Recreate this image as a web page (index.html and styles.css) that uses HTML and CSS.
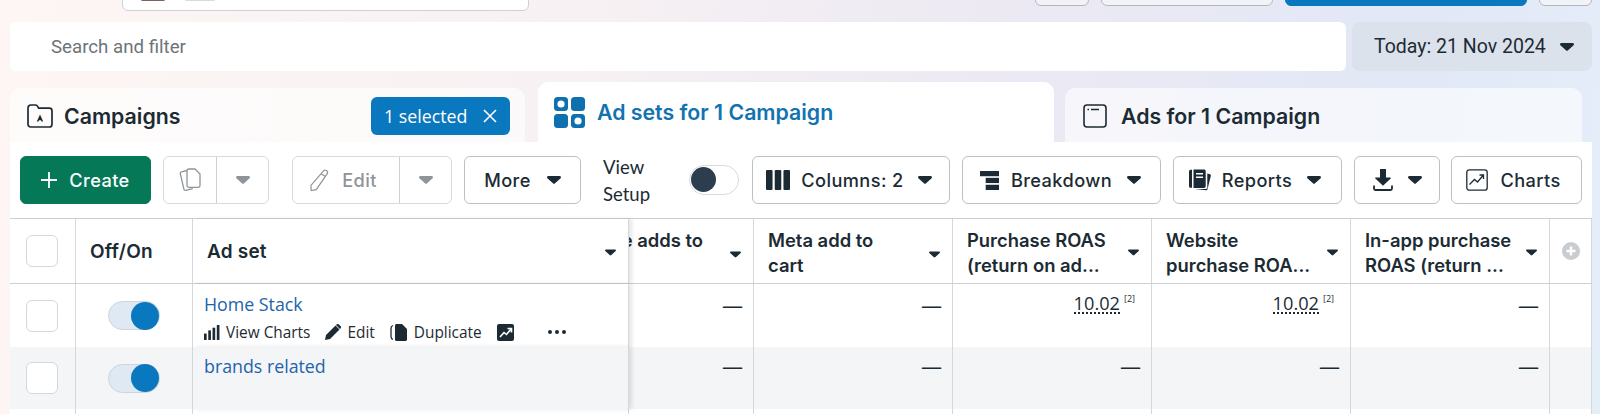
FILE: index.html
```html
<!DOCTYPE html>
<html lang="en">
<head>
<meta charset="utf-8">
<title>Ad sets</title>
<link rel="stylesheet" href="styles.css">
</head>
<body>
<svg class="defs" width="0" height="0" aria-hidden="true">
  <symbol id="caret" viewBox="0 0 16 9"><path d="M1.6 0h12.8c1.3 0 2 1.4 1.2 2.4L9.2 8.2a1.7 1.7 0 0 1-2.4 0L.4 2.4C-.4 1.4.3 0 1.6 0z"/></symbol>
</svg>
<div class="page">
  <header class="topbar">
    <div class="account"><span class="sliver sliver-a"></span><span class="sliver sliver-b"></span></div>
    <div class="top-actions">
      <span class="top-btn tb-1"></span>
      <span class="top-btn tb-2"></span>
      <span class="top-btn tb-3"></span>
      <span class="top-btn tb-4"></span>
    </div>
  </header>

  <div class="filter-row">
    <div class="search">Search and filter</div>
    <div class="date">Today: 21 Nov 2024 <svg class="caret date-caret"><use href="#caret"/></svg></div>
  </div>

  <nav class="tabs">
    <div class="tab tab-campaigns">
      <svg class="tab-icon" viewBox="0 0 26 24" fill="none" stroke="#1c2b33" stroke-width="1.7"><path d="M1 4.2C1 2.4 2.2 1 4 1h4.6c1 0 1.7.7 2.2 1.6l.8 1.6H22.4c1.500 0 2.600 1.100 2.600 2.600v13.400c0 1.600-1.100 2.800-2.700 2.800H3.700C2.100 23 1 21.800 1 20.200z"/><path d="M13 10.500l-3.200 7h1.700l.5-1.300h2l.5 1.300h1.700z" fill="#1c2b33" stroke="none"/></svg>
      <span class="tab-title">Campaigns</span>
      <span class="pill">1 selected <svg class="pill-x" viewBox="0 0 14 14" fill="none" stroke="#fff" stroke-width="1.600"><path d="M1 1l12 12M13 1L1 13"/></svg></span>
    </div>
    <div class="tab tab-active">
      <svg class="tab-icon-active" viewBox="0 0 31 31"><g fill="#0f70b0"><rect width="14" height="14" rx="3.500"/><rect x="17" width="14" height="14" rx="3.500"/><rect y="17" width="14" height="14" rx="3.500"/><rect x="17" y="17" width="14" height="14" rx="3.500"/></g><circle cx="7" cy="7" r="3.600" fill="#fff"/><circle cx="24" cy="24" r="3.600" fill="#fff"/></svg>
      <span class="tab-title active-title">Ad sets for 1 Campaign</span>
    </div>
    <div class="tab tab-ads">
      <svg class="tab-icon ads-icon" viewBox="0 0 24 24" fill="none" stroke="#1c2b33" stroke-width="1.600"><rect x="1" y="1" width="22" height="22" rx="3"/><path d="M4.500 5.500h1.500M8 5.500h8"/></svg>
      <span class="tab-title">Ads for 1 Campaign</span>
    </div>
  </nav>

  <main class="panel">
    <div class="toolbar">
      <button class="btn btn-create"><svg class="ico-plus" viewBox="0 0 16 16" stroke="#fff" stroke-width="1.800"><path d="M8 0v16M0 8h16"/></svg>Create</button>
      <div class="btn-group group-copy">
        <span class="seg seg-main"><svg class="ico-20" viewBox="0 0 22 24" fill="none" stroke="#8f9499" stroke-width="1.300"><path d="M8 2.500L2.500 3.800C1.600 4 1 4.800 1.300 5.700l3.600 15.400c.2.900 1 1.400 1.900 1.200l7-1.600"/><path d="M8 2.800C8 1.800 8.800 1 9.800 1H16l5 5v11.500c0 1-.8 1.800-1.800 1.800H9.800c-1 0-1.800-.8-1.800-1.800z"/></svg></span>
        <span class="seg seg-caret"><svg class="caret caret-muted"><use href="#caret"/></svg></span>
      </div>
      <div class="btn-group group-edit">
        <span class="seg seg-edit"><svg class="ico-20 ico-pencil" viewBox="0 0 24 24" fill="none" stroke="#8f9499" stroke-width="1.300"><path d="M16.500 2.500a2.600 2.600 0 0 1 4.500 2.600L9 22.500l-5.500 1-.3-5.600zM14.500 5.500l5 3"/></svg>Edit</span>
        <span class="seg seg-caret"><svg class="caret caret-muted"><use href="#caret"/></svg></span>
      </div>
      <button class="btn btn-more">More<svg class="caret"><use href="#caret"/></svg></button>
      <div class="view-setup">View<br>Setup</div>
      <span class="switch"><span class="switch-knob"></span></span>
      <button class="btn btn-columns"><svg class="ico-columns" viewBox="0 0 22 20" fill="#1c2b33" preserveAspectRatio="none"><rect width="6" height="20" rx="1"/><rect x="8" width="6" height="20" rx="1"/><rect x="16" width="6" height="20" rx="1"/></svg>Columns: 2<svg class="caret"><use href="#caret"/></svg></button>
      <button class="btn btn-breakdown"><svg class="ico-breakdown" viewBox="0 0 20 20" fill="#1c2b33"><rect width="20" height="5.500"/><rect x="6" y="7.200" width="14" height="5.500"/><rect x="6" y="14.500" width="14" height="5.500"/></svg>Breakdown<svg class="caret"><use href="#caret"/></svg></button>
      <button class="btn btn-reports"><svg class="ico-reports" viewBox="0 0 22 22" fill="#1c2b33"><path d="M0 2.500C0 1.500.7.800 1.500.8H3v18H1.500C.7 18.800 0 18 0 17z"/><path d="M4.500.5H15c1 0 1.700.7 1.700 1.700v15c0 1-.7 1.700-1.700 1.700H4.500zM7 4v1.500h7V4zm0 3.500V9h7V7.500z" fill-rule="evenodd"/><path d="M18.300 4.500l2.700.8c.7.2 1 .9.8 1.600l-3.300 13.400c-.2.800-.9 1.200-1.700 1L6 19.900h11c.8 0 1.300-.6 1.300-1.400z"/></svg>Reports<svg class="caret"><use href="#caret"/></svg></button>
      <button class="btn btn-download"><svg class="ico-download" viewBox="0 0 20 22" fill="#1c2b33"><path d="M7 0h6v8.500h4.200c.6 0 .9.700.5 1.100L10 16.800 2.300 9.600c-.4-.4-.1-1.100.5-1.100H7z"/><path d="M1 16.500v3c0 1 .6 1.500 1.500 1.500h15c.9 0 1.500-.5 1.500-1.500v-3" fill="none" stroke="#1c2b33" stroke-width="1.800"/></svg><svg class="caret"><use href="#caret"/></svg></button>
      <button class="btn btn-charts"><svg class="ico-charts" viewBox="0 0 22 22" fill="none" stroke="#1c2b33" stroke-width="1.300"><rect x=".8" y=".8" width="20.400" height="20.400" rx="2.500"/><path d="M3.500 15.500l5-5 3 2.500 6-7M13.500 6h4v4"/></svg>Charts</button>
    </div>

    <div class="table">
      <div class="row row-head">
        <div class="cell cell-check"><span class="checkbox"></span></div>
        <div class="cell cell-toggle head-label">Off/On</div>
        <div class="cell cell-name head-label frozen"><span>Ad set</span><svg class="caret caret-sm"><use href="#caret"/></svg></div>
        <div class="cell head-cell clipped"><span class="clipped-text">Purchase adds to</span><svg class="caret caret-sm caret-low"><use href="#caret"/></svg></div>
        <div class="cell head-cell"><span class="head-text">Meta add to<br>cart</span><svg class="caret caret-sm caret-low"><use href="#caret"/></svg></div>
        <div class="cell head-cell"><span class="head-text">Purchase ROAS<br>(return on ad...</span><svg class="caret caret-sm"><use href="#caret"/></svg></div>
        <div class="cell head-cell"><span class="head-text">Website<br>purchase ROA...</span><svg class="caret caret-sm"><use href="#caret"/></svg></div>
        <div class="cell head-cell"><span class="head-text">In-app purchase<br>ROAS (return ...</span><svg class="caret caret-sm"><use href="#caret"/></svg></div>
        <div class="cell cell-add"><svg class="ico-add" viewBox="0 0 18 18"><circle cx="9" cy="9" r="9" fill="#c9cdd1"/><path d="M9 4.500v9M4.500 9h9" stroke="#fff" stroke-width="2.400"/></svg></div>
      </div>

      <div class="row row-one">
        <div class="cell cell-check"><span class="checkbox"></span></div>
        <div class="cell cell-toggle"><span class="toggle"><span class="toggle-knob"></span></span></div>
        <div class="cell cell-name frozen name-stack">
          <a class="name-link">Home Stack</a>
          <div class="row-actions">
            <span class="action"><svg class="ico-bars" viewBox="0 0 15 14" fill="#1c2b33"><rect y="8" width="2.500" height="6"/><rect x="4" y="5" width="2.500" height="9"/><rect x="8" y="2.500" width="2.500" height="11.500"/><rect x="12" width="2.500" height="14"/></svg>View Charts</span>
            <span class="action"><svg class="ico-edit" viewBox="0 0 16 16" fill="#1c2b33"><path d="M0 16l1-5L10.500 1.500l4 4L5 15zM11.500.5c.7-.7 1.700-.7 2.400 0l1.600 1.600c.7.700.7 1.700 0 2.400l-.5.500-4-4z"/></svg>Edit</span>
            <span class="action"><svg class="ico-dup" viewBox="0 0 18 17"><path d="M3 1.500C1.500 2 1 3 1 4.500v8c0 1.500.5 2.500 2 3" fill="none" stroke="#1c2b33" stroke-width="1.300"/><path d="M5 1.500C5 .7 5.700 0 6.500 0H12l5 5v10.500c0 .8-.7 1.500-1.500 1.500h-9C5.700 17 5 16.300 5 15.500z" fill="#1c2b33"/></svg>Duplicate</span>
            <svg class="ico-trend" viewBox="0 0 17 17"><rect width="17" height="17" rx="2" fill="#1c2b33"/><path d="M3 13l4-4.500 2.500 2L14 5M10.500 4.500H14.500V8.500" fill="none" stroke="#fff" stroke-width="1.600"/></svg>
            <span class="dots"><i></i><i></i><i></i></span>
          </div>
        </div>
        <div class="cell num">—</div>
        <div class="cell num">—</div>
        <div class="cell num"><span class="value">10.02</span><sup class="note">[2]</sup></div>
        <div class="cell num"><span class="value">10.02</span><sup class="note">[2]</sup></div>
        <div class="cell num">—</div>
        <div class="cell"></div>
      </div>

      <div class="row row-two">
        <div class="cell cell-check"><span class="checkbox"></span></div>
        <div class="cell cell-toggle"><span class="toggle"><span class="toggle-knob"></span></span></div>
        <div class="cell cell-name frozen name-stack"><a class="name-link">brands related</a></div>
        <div class="cell num">—</div>
        <div class="cell num">—</div>
        <div class="cell num">—</div>
        <div class="cell num">—</div>
        <div class="cell num">—</div>
        <div class="cell"></div>
      </div>

      <div class="row row-three">
        <div class="cell"></div><div class="cell"></div><div class="cell frozen"></div><div class="cell"></div><div class="cell"></div><div class="cell"></div><div class="cell"></div><div class="cell"></div><div class="cell"></div>
      </div>
    </div>
  </main>
</div>
</body>
</html>
```
FILE: styles.css
```css
* { box-sizing: border-box; }
html, body { margin: 0; height: 100%; }
body { overflow: hidden; }
.defs { position: absolute; }
.page {
  height: 414px;
  overflow: hidden;
  padding-left: 10px;
  padding-right: 8px;
  color: #1c2b33;
  font-family: "Open Sans", sans-serif;
  background: linear-gradient(100deg, #fdf6f4 0%, #f7f1f3 35%, #ece9f3 60%, #e2e8f6 85%, #e4eef9 100%);
}
.caret { width: 14px; height: 8px; fill: #1c2b33; flex: none; }
.caret-muted { fill: #8f9499; }
.caret-sm { width: 11px; height: 7px; position: absolute; right: 12px; top: 30px; }
.caret-low { top: 32px; }

/* top strip */
.topbar { height: 11px; display: flex; align-items: flex-end; justify-content: space-between; padding-left: 112px; overflow: hidden; }
.account { width: 407px; height: 30px; flex: none; background: #fff; border: 1px solid #cdd0d4; border-radius: 6px; position: relative; }
.sliver { position: absolute; top: 16px; height: 3px; border-radius: 2px; background: #7d6068; }
.sliver-a { left: 18px; width: 24px; }
.sliver-b { left: 62px; width: 30px; background: #dadada; }
.top-actions { display: flex; align-items: flex-end; height: 6px; align-self: flex-start; gap: 12px; }
.top-btn { height: 30px; flex: none; align-self: flex-end; border: 1px solid #b4b8bc; border-radius: 6px; background: #f2f3f8; }
.tb-1 { width: 54px; }
.tb-2 { width: 172px; }
.tb-3 { width: 242px; background: #0a78be; border-color: #0a78be; }
.tb-4 { width: 53px; }

/* search row */
.filter-row { display: flex; gap: 6px; margin-top: 11px; height: 49px; }
.search { width: 1336px; background: #fff; border-radius: 6px; padding: 0 41px; display: flex; align-items: center; font-family: Roboto, sans-serif; font-size: 18.700px; color: #6d7479; }
.date { width: 240px; background: #dce2ec; border-radius: 8px; display: flex; align-items: center; padding-left: 22px; font-family: Roboto, sans-serif; font-size: 19.500px; color: #1c2b33; white-space: pre; }
.date-caret { margin-left: 9px; width: 14px; height: 8px; }

/* tabs */
.tabs { display: flex; align-items: flex-end; height: 71px; gap: 13px; }
.tab { height: 54px; background: rgba(255, 255, 255, .6); border-radius: 10px 10px 0 0; display: flex; align-items: center; font-family: Inter, sans-serif; }
.tab-title { font-size: 21.300px; font-weight: 600; white-space: nowrap; }
.tab-campaigns { width: 515px; padding: 2px 15px 0 17px; }
.tab-icon { width: 26px; height: 24px; margin-right: 11px; flex: none; }
.pill { margin-left: auto; width: 139px; height: 38px; background: #0a78be; border-radius: 6px; color: #fff; display: flex; align-items: center; justify-content: space-between; padding: 0 13px; font-family: "Open Sans", sans-serif; font-size: 17.800px; }
.pill-x { width: 14px; height: 14px; }
.tab-active { width: 516px; height: 60px; background: #fff; padding: 0 0 0 16px; }
.tab-icon-active { width: 31px; height: 31px; margin-right: 12px; flex: none; }
.active-title { color: #1273b0; }
.tab-ads { width: 517px; padding: 2px 0 0 18px; margin-left: -2px; }
.ads-icon { width: 24px; height: 24px; margin-right: 14px; }

/* white panel */
.panel { width: 1582px; background: #fff; height: 272px; }
.toolbar { display: flex; align-items: flex-start; gap: 12px; padding: 14px 10px 0; height: 76px; }
.btn, .btn-group { height: 48px; flex: none; border: 1.500px solid #bcc0c4; border-radius: 6px; background: #fff; color: #1c2b33; font-family: Inter, sans-serif; font-size: 18.200px; font-weight: 500; letter-spacing: .4px; padding: 0; display: flex; align-items: center; justify-content: center; }
.btn-create { width: 131px; background: #047857; border-color: #047857; color: #fff; gap: 12px; }
.ico-plus { width: 16px; height: 16px; }
.btn-group { border-color: #d8dadd; color: #8f9499; }
.seg { height: 100%; display: flex; align-items: center; justify-content: center; }
.seg-caret { border-left: 1.500px solid #cfd2d5; }
.group-copy { width: 106px; }
.group-copy .seg-main { width: 52px; }
.group-copy .seg-caret { flex: 1; }
.group-edit { width: 160px; margin-left: 11px; }
.seg-edit { width: 106px; gap: 12px; padding-right: 7px; }
.group-edit .seg-caret { flex: 1; }
.ico-20 { width: 22px; height: 24px; }
.btn-more { width: 117px; gap: 16px; }
.view-setup { width: 84px; margin-left: 10px; font-family: Lato, sans-serif; font-size: 18.500px; line-height: 27px; margin-top: -2px; }
.switch { width: 50px; height: 30px; margin-top: 9px; border: 1.500px solid #d8dadd; border-radius: 15px; padding: 1px 0 0 1px; flex: none; }
.switch-knob { display: block; width: 25px; height: 25px; border-radius: 50%; background: #2c3d4d; }
.btn-columns { width: 198px; gap: 11px; margin-left: 1px; padding-right: 4px; }
.btn-columns .caret { margin-left: 3px; }
.ico-columns { width: 24px; height: 20px; }
.btn-breakdown { width: 199px; gap: 12px; padding-right: 2px; }
.btn-breakdown .caret { margin-left: 3px; }
.ico-breakdown { width: 19px; height: 19px; }
.btn-reports { width: 169px; gap: 11px; padding-right: 5px; }
.btn-reports .caret { margin-left: 4px; }
.ico-reports { width: 22px; height: 22px; }
.btn-download { width: 86px; gap: 15px; }
.ico-download { width: 20px; height: 22px; }
.btn-charts { width: 131px; margin-left: -1px; gap: 12px; padding-right: 6px; }
.ico-charts { width: 22px; height: 22px; }

/* table */
.table { border-top: 1.500px solid #ccd0d4; }
.row { display: grid; grid-template-columns: 66px 117px 436px 125px 199px 199px 199px 199px 42px; }
.row-head { height: 65px; border-bottom: 1.500px solid #ccd0d4; }
.row-one { height: 63px; }
.row-two { height: 62px; background: #f4f5f7; }
.row-three { height: 10px; }
.cell { position: relative; border-right: 1px solid #d5d7da; min-width: 0; }
.cell-check { display: flex; align-items: center; justify-content: center; padding-right: 1px; }
.checkbox { width: 32px; height: 32px; background: #fff; border: 1.500px solid #d5d8db; border-radius: 6px; display: block; }
.cell-toggle { display: flex; align-items: center; justify-content: center; }
.head-label { font-family: Inter, sans-serif; font-size: 19px; font-weight: 600; justify-content: flex-start; padding-left: 14px; letter-spacing: .2px; }
.cell-name { background: #fff; border-right: 0; box-shadow: 3px 0 4px rgba(0, 0, 0, .1); z-index: 1; }
.row-two .frozen { background: #f4f5f7; }
.cell-name.head-label { display: flex; align-items: center; }
.toggle { width: 52px; height: 29px; background: #dfe9f3; border: 1.500px solid #cfd5da; border-radius: 15px; display: flex; align-items: center; justify-content: flex-end; }
.toggle-knob { width: 28px; height: 28px; border-radius: 50%; background: #0a78be; }
.frozen.cell-name { border-right: 1px solid #d5d7da; }
.head-cell { font-family: Inter, sans-serif; font-size: 18.400px; font-weight: 600; line-height: 25px; padding: 9px 0 0 14px; white-space: nowrap; }
.clipped { overflow: hidden; display: flex; justify-content: flex-end; padding: 9px 50px 0 0; }
.clipped-text { flex: none; }
.cell-add { display: flex; align-items: center; justify-content: flex-start; padding-left: 12px; }
.ico-add { width: 18px; height: 18px; }
.name-stack { padding: 8px 0 0 11px; }
.row-two .name-stack { padding-top: 7px; }
.name-link { font-size: 17.800px; line-height: 25px; color: #2264ab; display: block; }
.row-actions { display: flex; align-items: center; margin-top: 4px; font-size: 15.400px; height: 22px; position: relative; }
.action { display: flex; align-items: center; gap: 6px; margin-right: 15px; }
.ico-bars { width: 16px; height: 15px; }
.ico-edit { width: 16px; height: 16px; }
.ico-dup { width: 18px; height: 17px; }
.ico-trend { width: 17px; height: 17px; }
.dots { display: flex; gap: 3px; margin-left: 34px; }
.dots i { display: block; width: 4px; height: 4px; border-radius: 50%; background: #1c2b33; }
.num { text-align: right; padding: 9px 10px 0 0; font-size: 21px; line-height: 25px; white-space: nowrap; }
.row-two .num { padding-top: 7px; }
.value { font-size: 18.200px; border-bottom: 2px dotted #1c2b33; line-height: 18px; display: inline-block; vertical-align: top; margin-top: 1px; }
.note { font-size: 9px; line-height: 10px; margin: 0 6px 0 4px; vertical-align: top; position: relative; top: 1px; }
```
